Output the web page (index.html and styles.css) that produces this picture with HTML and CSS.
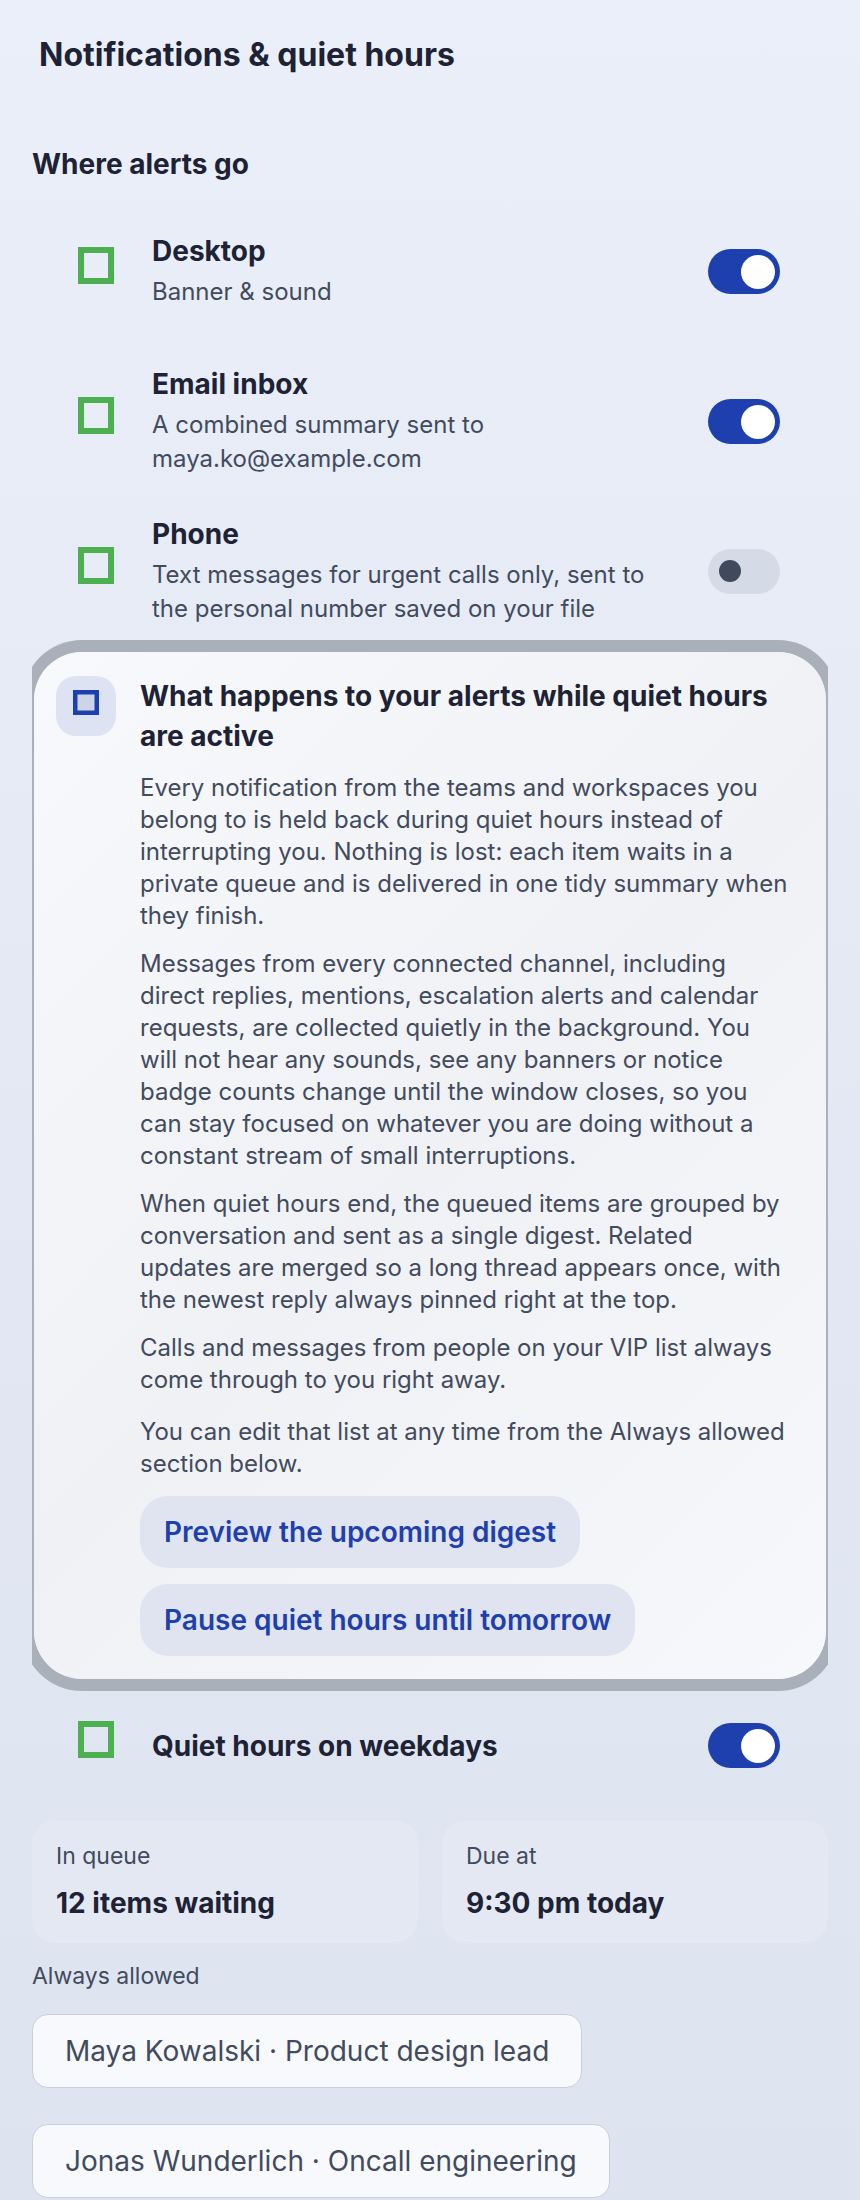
FILE: index.html
```html
<!DOCTYPE html>
<html lang="en">
<head>
    <meta charset="UTF-8">
    <meta name="viewport" content="width=device-width, initial-scale=1.0">
    <title>Notifications &amp; quiet hours</title>
    <link rel="stylesheet" href="styles.css">
</head>
<body>
    <main class="page">
        <h1 class="page-title">Notifications &amp; quiet hours</h1>

        <h2 class="section-title">Where alerts go</h2>

        <div class="settings">
            <div class="setting">
                <svg class="setting-icon" viewBox="0 0 36 37"><rect x="3" y="3" width="30" height="31"/></svg>
                <div class="setting-text">
                    <div class="setting-name">Desktop</div>
                    <div class="setting-desc">Banner &amp; sound</div>
                </div>
                <span class="toggle on"></span>
            </div>

            <div class="setting">
                <svg class="setting-icon" viewBox="0 0 36 37"><rect x="3" y="3" width="30" height="31"/></svg>
                <div class="setting-text">
                    <div class="setting-name">Email inbox</div>
                    <div class="setting-desc">A combined summary sent to maya.ko@example.com</div>
                </div>
                <span class="toggle on"></span>
            </div>

            <div class="setting">
                <svg class="setting-icon" viewBox="0 0 36 37"><rect x="3" y="3" width="30" height="31"/></svg>
                <div class="setting-text">
                    <div class="setting-name">Phone</div>
                    <div class="setting-desc">Text messages for urgent calls only, sent to the personal number saved on your file</div>
                </div>
                <span class="toggle"></span>
            </div>

            <!-- explainer for quiet hours -->
            <section class="info-card">
                <div class="info-badge">
                    <svg viewBox="0 0 26 25"><rect x="2.25" y="2.25" width="21.5" height="20.5"/></svg>
                </div>
                <div class="info-body">
                    <h3 class="info-title">What happens to your alerts while quiet hours are active</h3>
                    <p>Every notification from the teams and workspaces you belong to is held back during quiet hours instead of interrupting you. Nothing is lost: each item waits in a private queue and is delivered in one tidy summary when they finish.</p>
                    <p>Messages from every connected channel, including direct replies, mentions, escalation alerts and calendar requests, are collected quietly in the background. You will not hear any sounds, see any banners or notice badge counts change until the window closes, so you can stay focused on whatever you are doing without a constant stream of small interruptions.</p>
                    <p>When quiet hours end, the queued items are grouped by conversation and sent as a single digest. Related updates are merged so a long thread appears once, with the newest reply always pinned right at the top.</p>
                    <p>Calls and messages from people on your VIP list always come through to you right away.</p>
                    <p class="info-note">You can edit that list at any time from the Always allowed section below.</p>
                    <div class="info-actions">
                        <button class="pill-btn">Preview the upcoming digest</button>
                        <button class="pill-btn">Pause quiet hours until tomorrow</button>
                    </div>
                </div>
            </section>

            <div class="setting compact">
                <svg class="setting-icon" viewBox="0 0 36 37"><rect x="3" y="3" width="30" height="31"/></svg>
                <div class="setting-text">
                    <div class="setting-name">Quiet hours on weekdays</div>
                </div>
                <span class="toggle on"></span>
            </div>
        </div>

        <div class="stats">
            <div class="stat">
                <div class="stat-label">In queue</div>
                <div class="stat-value">12 items waiting</div>
            </div>
            <div class="stat">
                <div class="stat-label">Due at</div>
                <div class="stat-value">9:30 pm today</div>
            </div>
        </div>

        <div class="list-label">Always allowed</div>
        <div class="chips">
            <span class="chip">Maya Kowalski · Product design lead</span>
            <span class="chip">Jonas Wunderlich · Oncall engineering</span>
        </div>
    </main>
</body>
</html>
```

FILE: styles.css
```css
* {
    margin: 0;
    padding: 0;
    box-sizing: border-box;
}

body {
    font-family: Inter, 'Noto Sans', sans-serif;
    background: linear-gradient(180deg, #eaeff9 0%, #dde3ef 100%);
    color: #1d2234;
    min-height: 2200px;
}

.page {
    padding: 31px 32px 0;
}

.page-title {
    font-size: 32px;
    line-height: 48px;
    font-weight: 700;
    margin-left: 7px;
}

.section-title {
    margin-top: 65px;
    font-size: 28px;
    line-height: 40px;
    font-weight: 700;
}

.settings {
    margin-top: 12px;
    overflow: hidden;
}

.setting {
    display: flex;
    align-items: center;
    min-height: 150px;
    padding: 20px 48px 20px 46px;
}

.setting.compact {
    min-height: 0;
    margin-top: 22px;
}

.setting-icon {
    flex: none;
    width: 36px;
    height: 37px;
    margin: 0 38px 12px 0;
    fill: none;
    stroke: #4caf50;
    stroke-width: 6;
}

.setting-text {
    flex: 1;
    padding-right: 24px;
}

.setting-name {
    font-size: 28px;
    line-height: 36px;
    font-weight: 700;
    margin-bottom: 6px;
}

.setting.compact .setting-name {
    margin-bottom: 0;
}

.setting-desc {
    font-size: 24px;
    line-height: 34px;
    color: #424b5d;
}

.toggle {
    flex: none;
    position: relative;
    width: 72px;
    height: 45px;
    border-radius: 23px;
    background: #d5dbe6;
}

.toggle::after {
    content: '';
    position: absolute;
    top: 11px;
    left: 11px;
    width: 22px;
    height: 22px;
    border-radius: 50%;
    background: #414a5c;
}

.toggle.on {
    background: #1e40af;
}

.toggle.on::after {
    top: 6px;
    left: auto;
    right: 5px;
    width: 34px;
    height: 34px;
    background: #fff;
}

/* expanded explainer card */
.info-card {
    display: flex;
    gap: 24px;
    margin: 6px 2px 0;
    padding: 24px 36px 23px 22px;
    border-radius: 48px;
    background: linear-gradient(135deg, #f7f9fc 0%, #eff1f5 50%, #f6f8fb 100%);
    box-shadow: 0 0 0 12px #aab0b9;
}

.info-badge {
    flex: none;
    width: 60px;
    height: 60px;
    border-radius: 20px;
    background: #dde3f2;
    display: flex;
    align-items: center;
    justify-content: center;
}

.info-badge svg {
    width: 26px;
    height: 25px;
    margin-bottom: 8px;
    fill: #cdd4e6;
    stroke: #1e40af;
    stroke-width: 4.5;
}

.info-body {
    flex: 1;
}

.info-title {
    font-size: 28px;
    line-height: 40px;
    font-weight: 700;
}

.info-body p {
    margin-top: 16px;
    font-size: 24px;
    line-height: 32px;
    color: #424b5d;
}

.info-body .info-note {
    margin-top: 20px;
}

.info-actions {
    display: flex;
    flex-direction: column;
    align-items: flex-start;
    gap: 16px;
    margin-top: 16px;
}

.pill-btn {
    border: none;
    font-family: inherit;
    font-size: 28px;
    line-height: 40px;
    font-weight: 600;
    color: #1e40af;
    background: #dfe4f0;
    padding: 16px 24px;
    border-radius: 28px;
}

.stats {
    display: grid;
    grid-template-columns: 1fr 1fr;
    gap: 24px;
    margin-top: 30px;
}

.stat {
    background: #e3e8f3;
    border-radius: 24px;
    padding: 21px 24px 20px;
}

.stat-label {
    font-size: 23px;
    line-height: 30px;
    color: #424b5d;
}

.stat-value {
    margin-top: 12px;
    font-size: 28px;
    line-height: 40px;
    font-weight: 700;
}

.list-label {
    margin-top: 17px;
    font-size: 23px;
    line-height: 32px;
    color: #424b5d;
}

.chips {
    display: flex;
    flex-wrap: wrap;
    gap: 36px;
    margin-top: 22px;
}

.chip {
    background: #f7f9fc;
    border: 1px solid #c9cfdb;
    border-radius: 16px;
    padding: 16px 32px;
    font-size: 28px;
    line-height: 40px;
    color: #424b5d;
}
```
